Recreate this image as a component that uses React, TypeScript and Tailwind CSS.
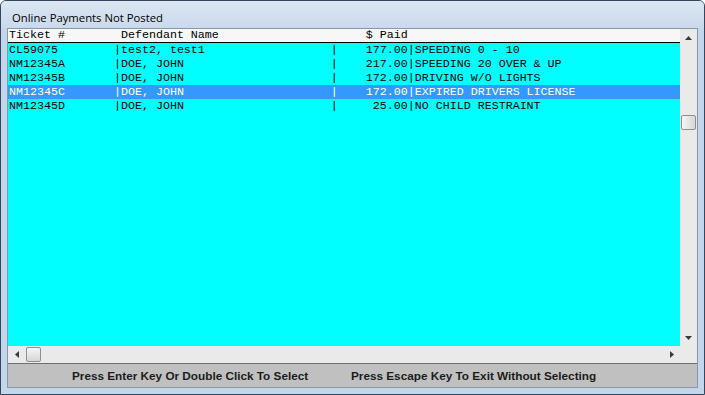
import React from 'react';

interface PaymentRow {
  ticket: string;
  name: string;
  paid: string;
  desc: string;
}

const rows: PaymentRow[] = [
  { ticket: 'CL59075', name: 'test2, test1', paid: '177.00', desc: 'SPEEDING 0 - 10' },
  { ticket: 'NM12345A', name: 'DOE, JOHN', paid: '217.00', desc: 'SPEEDING 20 OVER & UP' },
  { ticket: 'NM12345B', name: 'DOE, JOHN', paid: '172.00', desc: 'DRIVING W/O LIGHTS' },
  { ticket: 'NM12345C', name: 'DOE, JOHN', paid: '172.00', desc: 'EXPIRED DRIVERS LICENSE' },
  { ticket: 'NM12345D', name: 'DOE, JOHN', paid: '25.00', desc: 'NO CHILD RESTRAINT' },
];

const selectedIndex = 3;

// fixed width columns, like the old terminal list
const formatRow = (r: PaymentRow) =>
  r.ticket.padEnd(15) + '|' + r.name.padEnd(30) + '|' + r.paid.padStart(10) + '|' + r.desc;

const header = 'Ticket #'.padEnd(16) + 'Defendant Name'.padEnd(35) + '$ Paid';

const Arrow: React.FC<{ dir: 'up' | 'down' | 'left' | 'right' }> = ({ dir }) => {
  const pts = {
    up: '0,4 7,4 3.5,0',
    down: '0,0 7,0 3.5,4',
    left: '4,0 4,7 0,3.5',
    right: '0,0 0,7 4,3.5',
  }[dir];
  const vertical = dir === 'up' || dir === 'down';
  return (
    <svg width={vertical ? 7 : 4} height={vertical ? 4 : 7} viewBox={vertical ? '0 0 7 4' : '0 0 4 7'}>
      <polygon points={pts} fill="#3a3a3a" />
    </svg>
  );
};

const App: React.FC = () => {
  return (
    <div className="w-[705px] h-[395px] bg-[#c3d6ec] border border-[#34465c] rounded-t-[6px] flex flex-col overflow-hidden">
      <div className="h-[27px] shrink-0 bg-gradient-to-b from-[#dce6f2] to-[#c9d9ec] pl-[11px] pt-[10px] text-[11.3px] leading-[14px] text-black font-['Segoe_UI','Open_Sans',sans-serif]">
        Online Payments Not Posted
      </div>
      <div className="mx-[6px] h-[360px] shrink-0 border border-[#8a98a8] flex flex-col bg-[#c0c0c0]">
        <div className="h-[317px] shrink-0 flex">
          <div className="flex-1 bg-[#00ffff] font-['Liberation_Mono','Courier_New',monospace] text-[11.67px] whitespace-pre text-black">
            <div className="h-[14px] leading-[13px] bg-[#f7f7f7] border-b border-black pl-[1px]">{header}</div>
            {rows.map((r, i) => (
              <div
                key={r.ticket}
                className={
                  i === selectedIndex
                    ? 'h-[14px] leading-[14px] pl-[1px] bg-[#3399ff] text-white'
                    : 'h-[14px] leading-[14px] pl-[1px]'
                }
              >
                {formatRow(r)}
              </div>
            ))}
          </div>
          <div className="w-[17px] bg-[#eaeaea] flex flex-col items-center">
            <div className="h-[17px] flex items-center justify-center">
              <Arrow dir="up" />
            </div>
            <div className="flex-1 w-full relative">
              <div className="absolute left-[1px] top-[69px] w-[15px] h-[15px] border border-[#8f8f8f] rounded-[2px] bg-gradient-to-r from-[#f6f6f6] to-[#d6d6d6]" />
            </div>
            <div className="h-[17px] flex items-center justify-center">
              <Arrow dir="down" />
            </div>
          </div>
        </div>
        <div className="h-[17px] shrink-0 flex bg-[#eaeaea]">
          <div className="flex-1 flex items-center">
            <div className="w-[17px] h-full flex items-center justify-center">
              <Arrow dir="left" />
            </div>
            <div className="w-[15px] h-[15px] border border-[#8f8f8f] rounded-[2px] bg-gradient-to-b from-[#f6f6f6] to-[#d6d6d6] ml-[1px]" />
            <div className="flex-1" />
            <div className="w-[17px] h-full flex items-center justify-center">
              <Arrow dir="right" />
            </div>
          </div>
          <div className="w-[17px]" />
        </div>
        <div className="h-[1px] shrink-0 bg-[#6f6f6f]" />
        <div className="flex-1 flex items-center pt-[1px] text-[11.75px] font-bold text-[#1c1c1c] font-['Liberation_Sans',Arial,sans-serif]">
          <span className="ml-[64px] w-[279px]">Press Enter Key Or Double Click To Select</span>
          <span>Press Escape Key To Exit Without Selecting</span>
        </div>
      </div>
    </div>
  );
};

export default App;
